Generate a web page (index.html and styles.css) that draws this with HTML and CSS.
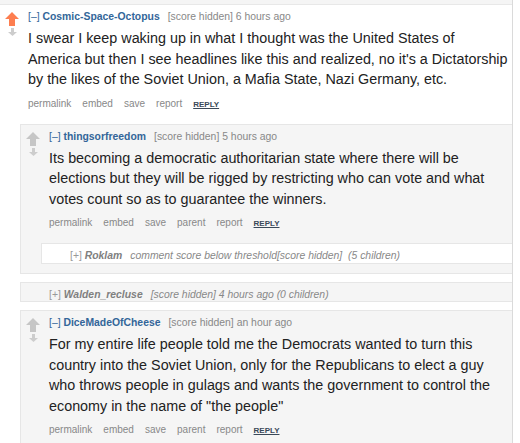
FILE: index.html
```html
<!DOCTYPE html>
<html>
<head>
    <link rel="stylesheet" href="styles.css">
</head>
<body>
    <div class="page">
        <div class="prev"></div>

        <div class="comment top">
            <div class="row">
                <div class="midcol">
                    <svg class="up upmod" viewBox="0 0 14 14"><polygon points="7,0 14,7 10,7 10,14 4,14 4,7 0,7"/></svg>
                    <svg class="down" viewBox="0 0 9 8"><polygon points="3,0 6,0 6,4 9,4 4.5,8 0,4 3,4"/></svg>
                </div>
                <div class="entry">
                    <p class="tagline"><a class="expand">[–]</a> <a class="author">Cosmic-Space-Octopus</a><span class="score">[score hidden]</span> <span>6 hours ago</span></p>
                    <div class="md">I swear I keep waking up in what I thought was the United States of<br>America but then I see headlines like this and realized, no it's a Dictatorship by the likes of the Soviet Union, a Mafia State, Nazi Germany, etc.</div>
                    <ul class="buttons">
                        <li>permalink</li>
                        <li>embed</li>
                        <li>save</li>
                        <li>report</li>
                        <li class="reply">reply</li>
                    </ul>
                </div>
            </div>

            <div class="child">
                <div class="comment nested">
                    <div class="row">
                        <div class="midcol">
                            <svg class="up" viewBox="0 0 14 14"><polygon points="7,0 14,7 10,7 10,14 4,14 4,7 0,7"/></svg>
                            <svg class="down" viewBox="0 0 9 8"><polygon points="3,0 6,0 6,4 9,4 4.5,8 0,4 3,4"/></svg>
                        </div>
                        <div class="entry">
                            <p class="tagline"><a class="expand">[–]</a> <a class="author">thingsorfreedom</a><span class="score">[score hidden]</span> <span>5 hours ago</span></p>
                            <div class="md">Its becoming a democratic authoritarian state where there will be elections but they will be rigged by restricting who can vote and what votes count so as to guarantee the winners.</div>
                            <ul class="buttons">
                                <li>permalink</li>
                                <li>embed</li>
                                <li>save</li>
                                <li>parent</li>
                                <li>report</li>
                                <li class="reply">reply</li>
                            </ul>
                        </div>
                    </div>

                    <div class="child">
                        <div class="comment nested collapsed">
                            <div class="row">
                                <div class="midcol"></div>
                                <p class="tagline"><a class="expand">[+]</a> <a class="author">Roklam</a><em class="score">comment score below threshold</em><em>[score hidden]</em>&nbsp; <em>(5 children)</em></p>
                            </div>
                        </div>
                    </div>
                </div>

                <div class="comment nested collapsed">
                    <div class="row">
                        <div class="midcol"></div>
                        <p class="tagline"><a class="expand">[+]</a> <a class="author">Walden_recluse</a><em class="score">[score hidden]</em> <em>4 hours ago</em> <em>(0 children)</em></p>
                    </div>
                </div>

                <div class="comment nested">
                    <div class="row">
                        <div class="midcol">
                            <svg class="up" viewBox="0 0 14 14"><polygon points="7,0 14,7 10,7 10,14 4,14 4,7 0,7"/></svg>
                            <svg class="down" viewBox="0 0 9 8"><polygon points="3,0 6,0 6,4 9,4 4.5,8 0,4 3,4"/></svg>
                        </div>
                        <div class="entry">
                            <p class="tagline"><a class="expand">[–]</a> <a class="author">DiceMadeOfCheese</a><span class="score">[score hidden]</span> <span>an hour ago</span></p>
                            <div class="md">For my entire life people told me the Democrats wanted to turn this country into the Soviet Union, only for the Republicans to elect a guy who throws people in gulags and wants the government to control the economy in the name of "the people"</div>
                            <ul class="buttons">
                                <li>permalink</li>
                                <li>embed</li>
                                <li>save</li>
                                <li>parent</li>
                                <li>report</li>
                                <li class="reply">reply</li>
                            </ul>
                        </div>
                    </div>
                </div>
            </div>
        </div>
    </div>
</body>
</html>
```

FILE: styles.css
```css
body {
    margin: 0;
    background: #fff;
    font-family: "Liberation Sans", Arial, sans-serif;
}
.page {
    width: 512px;
    border-right: 1px solid #dadada;
}
.prev {
    height: 4px;
    background: #f5f5f5;
    border-bottom: 1px solid #e8e8e8;
}
.comment {
    padding-top: 5px;
}
.comment.nested {
    background: #f5f5f5;
    border: 1px solid #e6e6e6;
    border-right: none;
    padding-bottom: 9px;
}
.comment.nested + .comment.nested {
    margin-top: 8px;
}
.comment.collapsed {
    padding-bottom: 0.5px;
}
.child .child .comment.nested {
    background: #fff;
}
.row {
    display: flex;
    padding-left: 5px;
}
.midcol {
    width: 14px;
    margin-right: 9px;
    padding-top: 2px;
    display: flex;
    flex-direction: column;
    align-items: center;
    flex-shrink: 0;
}
.up {
    width: 14px;
    height: 14px;
    fill: #c6c6c6;
}
.up.upmod {
    fill: #fd7e50;
}
.down {
    width: 9px;
    height: 8px;
    margin-top: 2px;
    fill: #cdcdcd;
}
.entry {
    flex: 1;
    min-width: 0;
}
.nested .entry {
    padding-right: 12px;
}
.top > .row .md {
    margin-right: -4px;
}
.tagline {
    margin: 0;
    font-size: 10.4px;
    line-height: 13px;
    color: #888;
    white-space: nowrap;
}
.expand {
    color: #369;
}
.author {
    color: #369;
    font-weight: bold;
}
.score {
    margin-left: 8px;
}
.collapsed .tagline em {
    font-style: italic;
}
.collapsed .expand {
    color: #999;
}
.collapsed .author {
    color: #808080;
    font-style: italic;
}
.md {
    margin: 5px 0 7px;
    font-size: 14.35px;
    line-height: 20.5px;
    color: #222;
}
.buttons {
    list-style: none;
    margin: 0;
    padding: 0;
    display: flex;
    align-items: baseline;
    gap: 11px;
    font-size: 10px;
    line-height: 13px;
    color: #888;
}
.buttons .reply {
    font-size: 8px;
    font-weight: bold;
    text-transform: uppercase;
    text-decoration: underline;
    color: #3a4959;
}
.child {
    margin-left: 20px;
    margin-top: 13px;
}
```
